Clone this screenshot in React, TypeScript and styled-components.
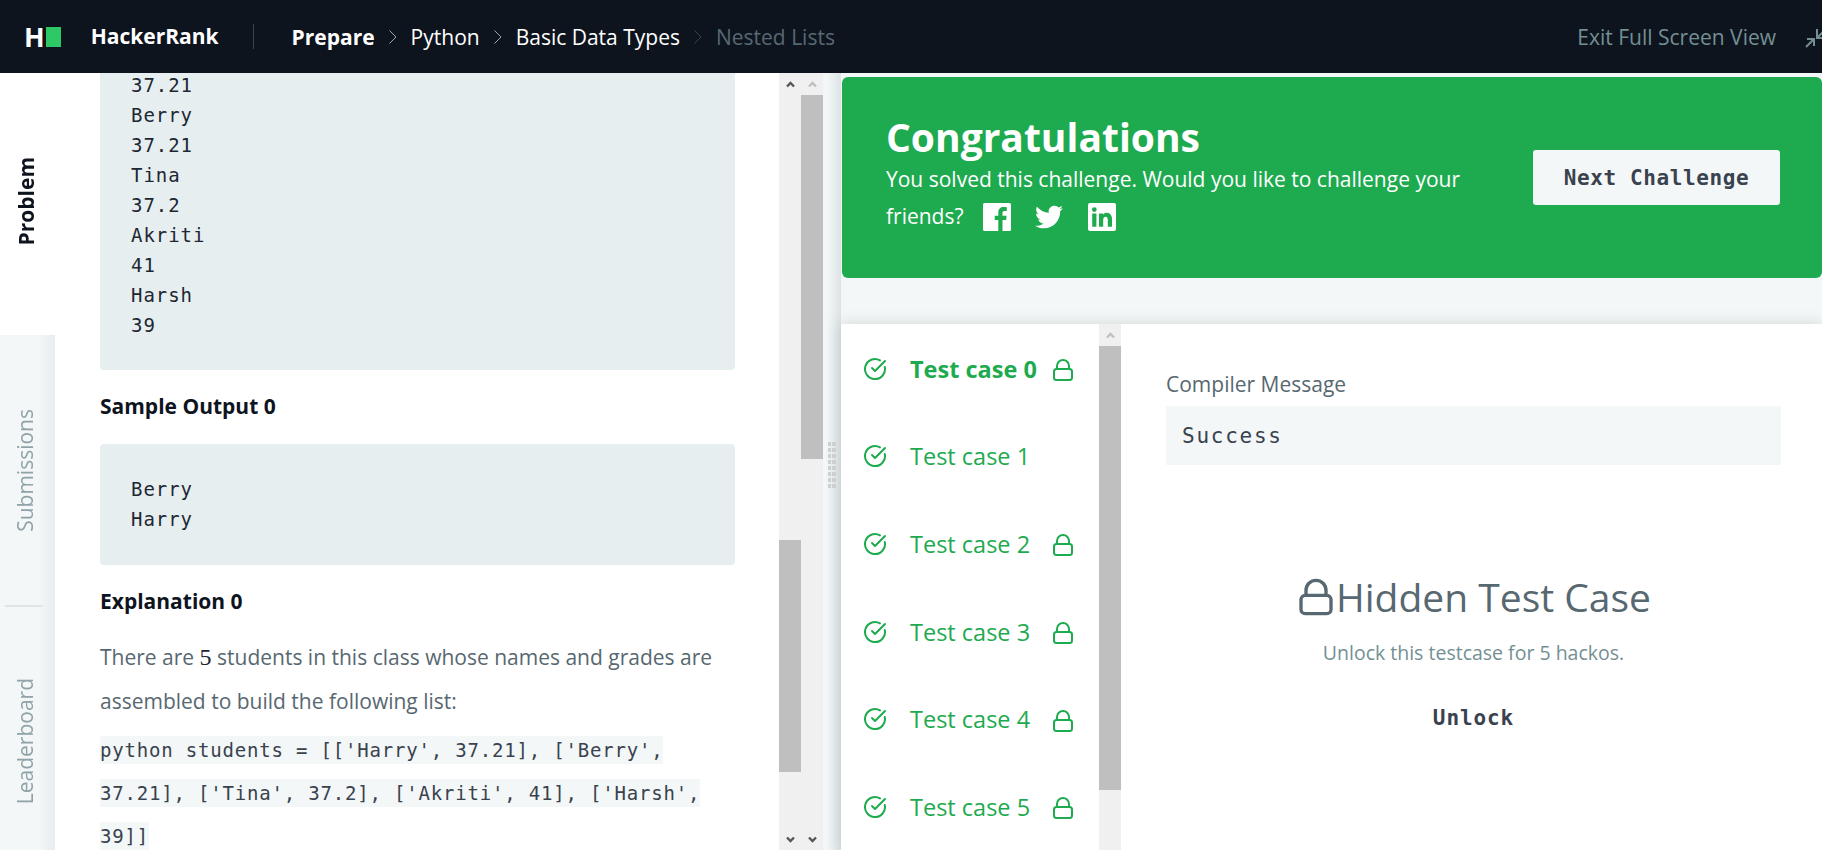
import React from "react";
import styled, { createGlobalStyle } from "styled-components";
import { FaTwitter } from "react-icons/fa";
import { LuCircleCheckBig } from "react-icons/lu";

const GlobalStyle = createGlobalStyle`
  html, body { margin: 0; padding: 0; height: 100%; overflow: hidden; background: #fff; }
  body { font-family: "Open Sans", "Liberation Sans", sans-serif; }
  * { box-sizing: border-box; }
`;
const mono = `"DejaVu Sans Mono", "Liberation Mono", monospace`;

const Page = styled.div`
  width: 1822px; height: 850px; display: flex; flex-direction: column; overflow: hidden;
`;
const Header = styled.header`
  height: 73px; flex: none; background: #0e141e; display: flex; align-items: center; color: #fff; overflow: hidden;
`;
const Logo = styled.div`
  display: flex; align-items: center; margin-left: 24px;
  font-weight: 700; font-size: 27px; line-height: 1;
`;
const LogoBar = styled.span`
  width: 15px; height: 20px; background: #2ec866; margin-left: 1px;
`;
const Brand = styled.div`
  margin-left: 30px; font-size: 21px; font-weight: 700; padding-right: 34px; height: 25px; line-height: 24px;
  border-right: 1px solid #39424e;
`;
const Crumbs = styled.nav`
  display: flex; align-items: center; margin-left: 38px; font-size: 21px;
`;
const Crumb = styled.span<{ $bold?: boolean; $muted?: boolean }>`
  font-weight: ${(p) => (p.$bold ? 700 : 400)};
  color: ${(p) => (p.$muted ? "#576871" : "#fff")};
`;
const Chevron = styled.svg<{ $muted?: boolean }>`
  width: 10px; height: 16px; margin: 0 13px; fill: none; stroke-width: 1;
  stroke: ${(p) => (p.$muted ? "#39424e" : "#9aa5ad")};
`;
const ExitView = styled.div`
  margin-left: auto; margin-right: -9px; display: flex; align-items: center; color: #738f93; font-size: 21px; flex: none;
`;
const ExitIcon = styled.svg`
  width: 26px; height: 26px; margin-left: 29px; flex: none; fill: none; stroke: #738f93; stroke-width: 2;
  display: block;
`;
const Main = styled.main`
  flex: 1; display: flex; min-height: 0;
`;
const Sidebar = styled.aside`
  width: 55px; flex: none; display: flex; flex-direction: column; overflow: hidden;
  background: linear-gradient(to right, #f3f7f7 70%, #e8ecee 100%);
`;
const SideTab = styled.div<{ $h: number; $active?: boolean }>`
  height: ${(p) => p.$h}px; flex: none; display: flex; align-items: center; justify-content: center;
  background: ${(p) => (p.$active ? "#fff" : "transparent")};
  ${(p) => (p.$active ? "padding: 0 4px 6px 0;" : "padding: 0 5px 0 0;")}
`;
const SideLabel = styled.span<{ $active?: boolean }>`
  writing-mode: vertical-rl; transform: rotate(180deg); font-size: 21px; white-space: nowrap;
  font-weight: ${(p) => (p.$active ? 700 : 400)};
  color: ${(p) => (p.$active ? "#0e141e" : "#8fa3a8")};
`;
const SideRule = styled.div`
  height: 2px; margin: 0 12px 0 5px; background: #dfe5e7; flex: none;
`;
const Problem = styled.section`
  width: 724px; flex: none; overflow: hidden; padding: 0 44px 0 45px; background: #fff;
`;
const Pre = styled.pre<{ $top?: boolean }>`
  margin: ${(p) => (p.$top ? "-3px 0 0" : "0")}; background: #e7eef0; border-radius: 4px;
  padding: ${(p) => (p.$top ? "0 31px 30px" : "30px 31px 31px")};
  font-family: ${mono}; font-size: 19px; line-height: 30px; color: #1d2733; letter-spacing: 0.95px;
`;
const SubHead = styled.h3`
  margin: 23px 0 25px; font-size: 21px; line-height: 26px; font-weight: 700; color: #0e141e;
`;
const Para = styled.p`
  margin: -4px 0 0; font-size: 21px; line-height: 44px; color: #576871;
`;
const MathDigit = styled.span`
  font-family: "Liberation Serif", serif; font-size: 24px; color: #1d2733;
`;
const CodePara = styled.p`
  margin: 6px 0 0; line-height: 43px; font-size: 19px;
`;
const Code = styled.code`
  font-family: ${mono}; font-size: 19px; background: #f3f7f7; color: #39424e; letter-spacing: 0.81px;
  padding: 3px 0;
`;
const ScrollTrack = styled.div`
  width: 22px; flex: none; background: #f0f0f0; display: flex; flex-direction: column;
`;
const ArrowBox = styled.div<{ $faint?: boolean; $down?: boolean }>`
  height: 22px; flex: none; display: flex; align-items: center; justify-content: center;
  ${(p) => (p.$down ? "margin-top: auto;" : "")}
  svg { width: 9px; height: 7px; fill: none; stroke-width: 2.4; stroke: ${(p) => (p.$faint ? "#c0c0c0" : "#555")};
    transform: ${(p) => (p.$down ? "rotate(180deg)" : "none")}; }
`;
const Thumb = styled.div<{ $offset: number; $h: number }>`
  flex: none; background: #bfbfbf; height: ${(p) => p.$h}px; margin-top: ${(p) => p.$offset}px;
`;
const Splitter = styled.div`
  width: 18px; flex: none; display: flex; flex-direction: column; align-items: flex-start;
  padding: 369px 0 0 5px;
  background: linear-gradient(to right, #f3f7f7 20%, #dde3e5 100%);
`;
const GripDot = styled.span`
  display: block; width: 8px; height: 46px;
  background-image: repeating-linear-gradient(to bottom, #cfcfcf 0 4px, transparent 4px 6px);
  -webkit-mask-image: repeating-linear-gradient(to right, #000 0 3.5px, transparent 3.5px 4.5px);
  mask-image: repeating-linear-gradient(to right, #000 0 3.5px, transparent 3.5px 4.5px);
`;
const Right = styled.section`
  flex: 1; min-width: 0; display: flex; flex-direction: column; background: #f3f7f7; padding-top: 4px;
`;
const Banner = styled.div`
  height: 201px; flex: none; margin-left: 1px; background: #1eaa4f; border-radius: 6px; color: #fff;
  display: flex; align-items: flex-start; padding: 35px 42px 0 44px;
`;
const BannerText = styled.div`
  width: 600px; flex: none;
`;
const BannerTitle = styled.h1`
  margin: 0; font-size: 39px; line-height: 50px; font-weight: 700;
`;
const BannerSub = styled.div`
  font-size: 21px; line-height: 37px; margin-top: -1px;
`;
const Socials = styled.span`
  display: inline-flex; gap: 24.5px; margin-left: 19px; vertical-align: -7px;
  svg { width: 28px; height: 28px; display: block; fill: #fff; }
`;
const NextButton = styled.button`
  margin-left: auto; margin-top: 38px; width: 247px; height: 55px; border: 0; border-radius: 3px;
  background: #f3f7f7; color: #39424e; font-family: ${mono}; font-weight: 700; font-size: 21px; letter-spacing: 0.6px;
`;
const Results = styled.div`
  flex: 1; margin-top: 46px; display: flex; min-height: 0; background: #fff;
  box-shadow: 0 0 14px rgba(57, 66, 78, 0.18);
`;
const CaseList = styled.ul`
  list-style: none; margin: 0; padding: 1px 0 0; width: 258px; flex: none; overflow: hidden;
`;
const CaseRow = styled.li<{ $active?: boolean }>`
  height: 87.6px; display: flex; align-items: center; padding-left: 22px; color: #1eaa4f;
  font-size: 23.5px; font-weight: ${(p) => (p.$active ? 700 : 400)};
`;
const CaseName = styled.span`
  margin-left: 23px; width: 141px; flex: none; white-space: nowrap;
`;
const CaseLock = styled.span`
  display: block; flex: none; margin-top: 3px;
`;
const CheckIcon = styled(LuCircleCheckBig)`
  width: 24px; height: 24px; flex: none; stroke-width: 2;
`;
const LockSvg = styled.svg<{ $size: number; $color: string }>`
  width: ${(p) => p.$size}px; height: ${(p) => p.$size}px; flex: none; fill: none; display: block;
  stroke: ${(p) => p.$color}; stroke-width: 2;
`;
const Detail = styled.div`
  flex: 1; min-width: 0; padding: 46px 41px 0 45px; display: flex; flex-direction: column;
`;
const DetailLabel = styled.div`
  font-size: 21px; line-height: 28px; color: #576871;
`;
const SuccessBox = styled.div`
  height: 59px; margin-top: 8px; background: #f3f7f7; display: flex; align-items: center; padding-left: 16px;
  font-family: ${mono}; font-size: 21px; color: #39424e; letter-spacing: 1.75px;
`;
const Hidden = styled.div`
  display: flex; flex-direction: column; align-items: center; margin-top: 104px;
`;
const HiddenTitle = styled.div`
  display: flex; align-items: center; font-size: 39px; line-height: 56px; color: #576871;
`;
const HiddenNote = styled.div`
  font-size: 19.5px; line-height: 26px; margin-top: 15px; color: #738f93;
`;
const UnlockLink = styled.div`
  font-family: ${mono}; font-weight: 700; font-size: 21px; line-height: 28px; margin-top: 38px; color: #39424e; letter-spacing: 0.9px;
`;

const Lock = ({ size, color }: { size: number; color: string }) => (
  <LockSvg $size={size} $color={color} viewBox="0 0 24 24">
    <rect x="3" y="11" width="18" height="11" rx="2.5" />
    <path d="M6 11V8a6 6 0 0 1 12 0v3" />
  </LockSvg>
);
const Sep = ({ muted }: { muted?: boolean }) => (
  <Chevron $muted={muted} viewBox="0 0 10 16"><path d="M1.5 1.5 8 8l-6.5 6.5" /></Chevron>
);
const Up = () => <svg viewBox="0 0 9 7"><path d="M1 5.5 4.5 2 8 5.5" /></svg>;

const FacebookMark = () => (
  <svg viewBox="0 0 28 28">
    <path d="M1.5 0h25A1.5 1.5 0 0 1 28 1.5v25a1.5 1.5 0 0 1-1.5 1.5h-7V17h3.6l.5-4.2h-4.1v-2.7c0-1.2.4-2 2.1-2h2.2V4.3c-.4 0-1.7-.2-3.2-.2-3.2 0-5.3 1.9-5.3 5.5v3.2h-3.6V17h3.6v11H1.5A1.5 1.5 0 0 1 0 26.5v-25A1.5 1.5 0 0 1 1.5 0z" />
  </svg>
);
const LinkedinMark = () => (
  <svg viewBox="0 0 28 28">
    <path fillRule="evenodd" d="M2 0h24a2 2 0 0 1 2 2v24a2 2 0 0 1-2 2H2a2 2 0 0 1-2-2V2a2 2 0 0 1 2-2z M4.2 10.5v13.3h4.2V10.5z M6.3 4.2a2.4 2.4 0 1 0 0 4.8 2.4 2.4 0 0 0 0-4.8z M11 10.5v13.3h4.2v-6.8c0-1.9.7-3.2 2.4-3.2s2.2 1.3 2.2 3.2v6.8H24v-7.6c0-3.9-2.1-6.5-5.3-6.5-2 0-3.2 1-3.7 2V10.5z" />
  </svg>
);

const cases = [0, 1, 2, 3, 4, 5];

export default function App() {
  return (
    <Page>
      <GlobalStyle />
      <Header>
        <Logo>H<LogoBar /></Logo>
        <Brand>HackerRank</Brand>
        <Crumbs>
          <Crumb $bold>Prepare</Crumb><Sep />
          <Crumb>Python</Crumb><Sep />
          <Crumb>Basic Data Types</Crumb><Sep muted />
          <Crumb $muted>Nested Lists</Crumb>
        </Crumbs>
        <ExitView>
          Exit Full Screen View
          <ExitIcon viewBox="0 0 26 26">
            <path d="M1 23 9 15M2 15h7v7M12 14 21 5M12 5v9h9" />
          </ExitIcon>
        </ExitView>
      </Header>
      <Main>
        <Sidebar>
          <SideTab $h={262} $active><SideLabel $active>Problem</SideLabel></SideTab>
          <SideTab $h={270}><SideLabel>Submissions</SideLabel></SideTab>
          <SideRule />
          <SideTab $h={269}><SideLabel>Leaderboard</SideLabel></SideTab>
        </Sidebar>
        <Problem>
          <Pre $top>{`37.21
Berry
37.21
Tina
37.2
Akriti
41
Harsh
39`}</Pre>
          <SubHead>Sample Output 0</SubHead>
          <Pre>{`Berry
Harry`}</Pre>
          <SubHead>Explanation 0</SubHead>
          <Para>There are <MathDigit>5</MathDigit> students in this class whose names and grades are assembled to build the following list:</Para>
          <CodePara><Code>python students = [['Harry', 37.21], ['Berry', 37.21], ['Tina', 37.2], ['Akriti', 41], ['Harsh', 39]]</Code></CodePara>
        </Problem>
        <ScrollTrack>
          <ArrowBox><Up /></ArrowBox>
          <Thumb $offset={445} $h={232} />
          <ArrowBox $down><Up /></ArrowBox>
        </ScrollTrack>
        <ScrollTrack>
          <ArrowBox $faint><Up /></ArrowBox>
          <Thumb $offset={0} $h={364} />
          <ArrowBox $down><Up /></ArrowBox>
        </ScrollTrack>
        <Splitter><GripDot /></Splitter>
        <Right>
          <Banner>
            <BannerText>
              <BannerTitle>Congratulations</BannerTitle>
              <BannerSub>
                You solved this challenge. Would you like to challenge your friends?
                <Socials><FacebookMark /><FaTwitter /><LinkedinMark /></Socials>
              </BannerSub>
            </BannerText>
            <NextButton>Next Challenge</NextButton>
          </Banner>
          <Results>
            <CaseList>
              {cases.map((n) => (
                <CaseRow key={n} $active={n === 0}>
                  <CheckIcon />
                  <CaseName>Test case {n}</CaseName>
                  {n !== 1 && <CaseLock><Lock size={24} color="#1eaa4f" /></CaseLock>}
                </CaseRow>
              ))}
            </CaseList>
            <ScrollTrack>
              <ArrowBox $faint><Up /></ArrowBox>
              <Thumb $offset={0} $h={444} />
            </ScrollTrack>
            <Detail>
              <DetailLabel>Compiler Message</DetailLabel>
              <SuccessBox>Success</SuccessBox>
              <Hidden>
                <HiddenTitle><Lock size={40} color="#576871" />Hidden Test Case</HiddenTitle>
                <HiddenNote>Unlock this testcase for 5 hackos.</HiddenNote>
                <UnlockLink>Unlock</UnlockLink>
              </Hidden>
            </Detail>
          </Results>
        </Right>
      </Main>
    </Page>
  );
}
